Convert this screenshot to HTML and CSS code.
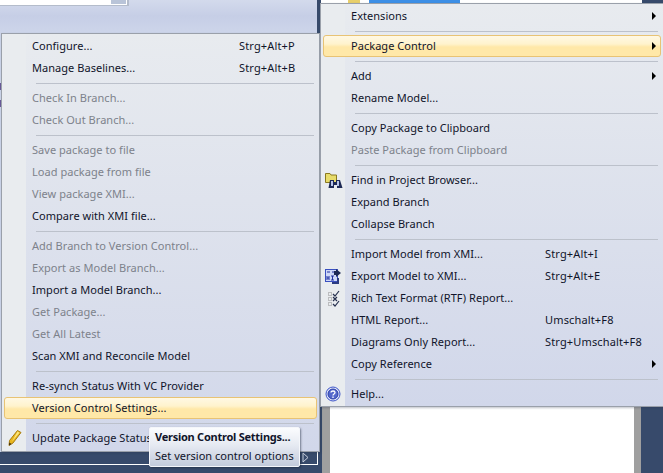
FILE: index.html
```html
<!DOCTYPE html>
<html lang="en">
<head>
    <meta charset="UTF-8">
    <meta name="viewport" content="width=device-width, initial-scale=1.0">
    <title>Package Control menu</title>
    <link rel="stylesheet" href="styles.css">
</head>
<body>

    <!-- Window behind the menus -->
    <div class="bg-top"><span class="bg-scroll"></span><span class="bg-ticks"></span></div>
    <div class="bg-lower">
        <svg class="bg-arrow" width="7" height="11" viewBox="0 0 7 11">
            <path d="M1 1 L6 5.5 L1 10 Z" fill="none" stroke="#c9d0de"/>
        </svg>
    </div>
    <div class="bg-tree"><span class="bg-folder"></span><span class="bg-selected"></span></div>
    <div class="bg-doc"></div>

    <!-- Left submenu -->
    <div class="menu menu-left">
        <div class="item"><span class="label">Configure...</span><span class="keys">Strg+Alt+P</span></div>
        <div class="item"><span class="label">Manage Baselines...</span><span class="keys">Strg+Alt+B</span></div>
        <div class="sep"></div>
        <div class="item off"><span class="label">Check In Branch...</span></div>
        <div class="item off"><span class="label">Check Out Branch...</span></div>
        <div class="sep"></div>
        <div class="item off"><span class="label">Save package to file</span></div>
        <div class="item off"><span class="label">Load package from file</span></div>
        <div class="item off"><span class="label">View package XMI...</span></div>
        <div class="item"><span class="label">Compare with XMI file...</span></div>
        <div class="sep"></div>
        <div class="item off"><span class="label">Add Branch to Version Control...</span></div>
        <div class="item off"><span class="label">Export as Model Branch...</span></div>
        <div class="item"><span class="label">Import a Model Branch...</span></div>
        <div class="item off"><span class="label">Get Package...</span></div>
        <div class="item off"><span class="label">Get All Latest</span></div>
        <div class="item"><span class="label">Scan XMI and Reconcile Model</span></div>
        <div class="sep"></div>
        <div class="item"><span class="label">Re-synch Status With VC Provider</span></div>
        <div class="item active"><span class="label">Version Control Settings...</span></div>
        <div class="sep"></div>
        <div class="item">
            <svg class="icon" width="16" height="18" viewBox="0 0 16 18">
                <path d="M10.5 0.5 L14 2.5 L6 13 L2 15.5 L2.5 10.5 Z" fill="#e8b51c" stroke="#a87c10" stroke-width="1"/>
                <path d="M10.5 1.5 L12.5 2.8 L5 11.5 Z" fill="#fbe680"/>
                <path d="M2.3 12.5 L4.5 14 L2 15.5 Z" fill="#3a2c10"/>
            </svg>
            <span class="label">Update Package Status...</span>
        </div>
    </div>

    <!-- Right context menu -->
    <div class="menu menu-right">
        <div class="item"><span class="label">Extensions</span><span class="arrow"></span></div>
        <div class="sep"></div>
        <div class="item active"><span class="label">Package Control</span><span class="arrow"></span></div>
        <div class="sep"></div>
        <div class="item"><span class="label">Add</span><span class="arrow"></span></div>
        <div class="item"><span class="label">Rename Model...</span></div>
        <div class="sep"></div>
        <div class="item"><span class="label">Copy Package to Clipboard</span></div>
        <div class="item off"><span class="label">Paste Package from Clipboard</span></div>
        <div class="sep"></div>
        <div class="item">
            <svg class="icon" width="18" height="17" viewBox="0 0 18 17">
                <path d="M0.5 1.5 H5 L6 3 H11.5 V10.5 H0.5 Z" fill="#e8dc6a" stroke="#8a7a20"/>
                <path d="M5 8 H9 V10 H11 V8 H15 L17.5 16 H12 V13 H9 V16 H3.5 Z" fill="#1e2a55"/>
                <path d="M6 9 H8 V14 H6 Z M12 9 H14 V14 H12 Z" fill="#b8c6ea"/>
            </svg>
            <span class="label">Find in Project Browser...</span>
        </div>
        <div class="item"><span class="label">Expand Branch</span></div>
        <div class="item"><span class="label">Collapse Branch</span></div>
        <div class="sep"></div>
        <div class="item"><span class="label">Import Model from XMI...</span><span class="keys">Strg+Alt+I</span></div>
        <div class="item">
            <svg class="icon" width="18" height="18" viewBox="0 0 18 18">
                <rect x="0.5" y="1.5" width="12" height="12" fill="#cfd8f8" stroke="#3a50c0"/>
                <path d="M2 4 H5 M7 4 H10 M2 8 V12 M4 8 V12 M2 10 H4 M6 8 H9 M7.5 8 V12 M6 12 H9" stroke="#2030a0" fill="none"/>
                <path d="M11 3 V1 L16 5 L11 9 V7 H9 V3 Z" fill="#1e2a55"/>
                <path d="M14 10 V16 H7 V14 H12 V10 Z" fill="#2c3c80"/>
            </svg>
            <span class="label">Export Model to XMI...</span><span class="keys">Strg+Alt+E</span>
        </div>
        <div class="item">
            <svg class="icon" width="16" height="17" viewBox="0 0 16 17">
                <path d="M3.5 2.5 H6.5 V5.5 H3.5 Z M3.5 7.5 H6.5 V10.5 H3.5 Z M3.5 12.5 H6.5 V15.5 H3.5 Z" fill="none" stroke="#8e8e8e" stroke-dasharray="1 1"/>
                <path d="M8 4 L10 6 L14 1 M8 7 L12 11 M12 7 L8 11 M8 14 L10 16 L14 11" fill="none" stroke="#27314f" stroke-width="1.2"/>
            </svg>
            <span class="label">Rich Text Format (RTF) Report...</span>
        </div>
        <div class="item"><span class="label">HTML Report...</span><span class="keys">Umschalt+F8</span></div>
        <div class="item"><span class="label">Diagrams Only Report...</span><span class="keys">Strg+Umschalt+F8</span></div>
        <div class="item"><span class="label">Copy Reference</span><span class="arrow"></span></div>
        <div class="sep"></div>
        <div class="item">
            <svg class="icon" width="16" height="16" viewBox="0 0 16 16">
                <circle cx="8" cy="8" r="7" fill="#dfe4fa" stroke="#3f56c8"/>
                <circle cx="8" cy="8" r="5" fill="#5468cc" stroke="#2a3ea8"/>
                <path d="M6 6.5 C6 4.5 10 4.5 10 6.5 C10 8 8 8 8 9.5" fill="none" stroke="#fff" stroke-width="1.3"/>
                <rect x="7.3" y="10.5" width="1.4" height="1.4" fill="#fff"/>
            </svg>
            <span class="label">Help...</span>
        </div>
    </div>

    <!-- Tooltip over the left menu -->
    <div class="tip">
        <div class="tip-title">Version Control Settings...</div>
        <div class="tip-text">Set version control options</div>
    </div>

</body>
</html>
```

FILE: styles.css
```css
body {
    margin: 0;
    width: 663px;
    height: 473px;
    overflow: hidden;
    position: relative;
    background-color: #374a6b;
    font-family: "Noto Sans", sans-serif;
    font-size: 11px;
    color: #10142a;
}

/* Background window pieces */
.bg-top {
    position: absolute;
    left: 0;
    top: 0;
    width: 317px;
    height: 452px;
    background: linear-gradient(to bottom, #d3daec 0, #c6cee6 16px, #cdd5ea 33px);
}

.bg-scroll {
    position: absolute;
    left: 0;
    top: 0;
    width: 127px;
    height: 5px;
    background-color: #fff;
    border-right: 2px solid #b4bccb;
    border-bottom: 1px solid #b4bccb;
}

.bg-scroll::after {
    content: "";
    position: absolute;
    right: 1px;
    top: 0;
    width: 15px;
    height: 4px;
    background-color: #b9c4d8;
}

.bg-ticks {
    position: absolute;
    left: 0;
    top: 83px;
    width: 1px;
    height: 24px;
    background: linear-gradient(to bottom, #6a5a9a 7px, transparent 7px, transparent 17px, #6a5a9a 17px);
}

.bg-lower {
    position: absolute;
    left: 0;
    top: 451px;
    width: 317px;
    height: 13px;
    border-right: 1px solid #fff;
    border-bottom: 1px solid #fff;
}

.bg-arrow {
    position: absolute;
    left: 302px;
    top: 1px;
}

.bg-tree {
    position: absolute;
    left: 321px;
    top: 0;
    width: 321px;
    height: 4px;
    background-color: #fff;
}

.bg-folder {
    position: absolute;
    left: 27px;
    top: 0;
    width: 12px;
    height: 3px;
    background-color: #e8cf6a;
}

.bg-selected {
    position: absolute;
    left: 48px;
    top: 0;
    width: 91px;
    height: 3px;
    background-color: #3d8fe6;
}

.bg-doc {
    position: absolute;
    left: 322px;
    top: 407px;
    width: 304px;
    height: 66px;
    background-color: #fff;
    border-left: 8px solid #9f9f9f;
    border-right: 7px solid #9f9f9f;
}

/* Menus */
.menu {
    position: absolute;
    box-sizing: border-box;
    padding: 1px 2px;
    border: 1px solid #9aa0aa;
    background: linear-gradient(to right, #e9ecef 24px, transparent 24px),
                linear-gradient(to bottom, #e8ebef 0%, #d1d7ea 100%);
    box-shadow: 1px 1px 2px rgba(40, 50, 70, 0.3);
}

.menu-left {
    left: 1px;
    top: 33px;
    width: 319px;
    height: 419px;
}

.menu-right {
    left: 320px;
    top: 3px;
    width: 344px;
    height: 404px;
}

.item {
    height: 22px;
    padding-bottom: 2px;
    display: flex;
    align-items: center;
    position: relative;
    box-sizing: border-box;
    border: 1px solid transparent;
    border-radius: 3px;
}

.label {
    margin-left: 27px;
    white-space: nowrap;
    letter-spacing: 0.04px;
}

.keys {
    position: absolute;
    white-space: nowrap;
    letter-spacing: 0.15px;
}

.menu-left .keys {
    left: 234px;
}

.menu-right .keys {
    left: 221px;
}

.off {
    color: #7d828b;
}

.active {
    border-color: #e8c374;
    background: linear-gradient(to bottom, #fff8e4 0%, #fff3cd 40%, #ffe8a8 55%, #ffe8a8 100%);
}

.sep {
    height: 1px;
    margin: 4px 3px 3px 32px;
    background-color: #bcc1cb;
}

.arrow {
    position: absolute;
    right: 4px;
    top: 6px;
    width: 0;
    height: 0;
    border-left: 4px solid #000;
    border-top: 4px solid transparent;
    border-bottom: 4px solid transparent;
}

.icon {
    position: absolute;
    left: 1px;
    top: 2px;
}

.menu-left .icon {
    left: 2px;
}

/* Tooltip */
.tip {
    position: absolute;
    left: 149px;
    top: 427px;
    width: 151px;
    height: 40px;
    box-sizing: border-box;
    padding: 0 5px;
    border: 1px solid #f4f6fa;
    border-radius: 2px;
    background: linear-gradient(to bottom, #fbfcfe 0%, #e6eaf2 45%, #c2cadb 100%);
    box-shadow: 1px 1px 2px rgba(20, 30, 50, 0.5);
    white-space: nowrap;
}

.tip-title {
    font-weight: bold;
    line-height: 17px;
    letter-spacing: -0.25px;
}

.tip-text {
    line-height: 21px;
    letter-spacing: 0.02px;
}
```
